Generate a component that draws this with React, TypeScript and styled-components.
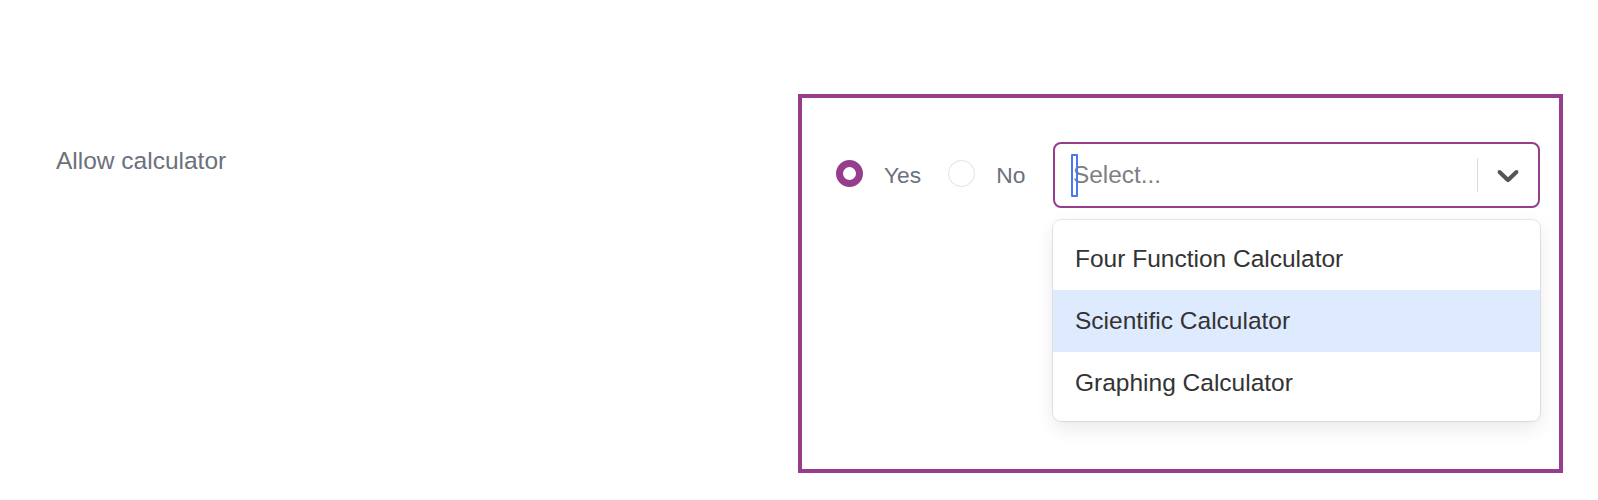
import React from "react";
import styled, { createGlobalStyle } from "styled-components";

const GlobalStyle = createGlobalStyle`
  html, body {
    margin: 0;
    padding: 0;
    background: #ffffff;
  }
  body {
    font-family: "Liberation Sans", Arial, sans-serif;
  }
  * { box-sizing: border-box; }
`;

const PURPLE = "#963e8d";

const Page = styled.div`
  display: flex;
  align-items: flex-start;
  height: 500px;
  padding-top: 94px;
`;

const LabelCol = styled.div`
  width: 798px;
  padding-left: 56px;
  padding-top: 53px;
`;

const FieldLabel = styled.span`
  font-size: 24.5px;
  line-height: 28px;
  color: #6b717d;
`;

const FocusBox = styled.div`
  width: 765px;
  height: 379px;
  border: 4px solid ${PURPLE};
  padding: 44px 19px 0 34px;
`;

const Row = styled.div`
  display: flex;
  align-items: center;
  gap: 27px;
`;

const RadioOption = styled.label`
  display: flex;
  align-items: center;
  gap: 21px;
  margin-top: -4px;
`;

const RadioDot = styled.span<{ $checked?: boolean }>`
  display: inline-block;
  width: 27px;
  height: 27px;
  border-radius: 50%;
  background: #ffffff;
  border: ${(p) => (p.$checked ? `7.5px solid ${PURPLE}` : "1.5px solid #dfe0e6")};
`;

const RadioText = styled.span`
  font-size: 22.8px;
  line-height: 28px;
  color: #6b717d;
  margin-top: 4px;
`;

const SelectWrap = styled.div`
  position: relative;
  width: 487px;
  margin-left: auto;
`;

const Control = styled.div`
  display: flex;
  align-items: center;
  height: 66px;
  border: 2px solid ${PURPLE};
  border-radius: 8px;
  background: #ffffff;
`;

const ValueContainer = styled.div`
  position: relative;
  flex: 1;
  align-self: stretch;
  display: flex;
  align-items: center;
  padding-left: 18px;
`;

const Placeholder = styled.span`
  font-size: 24.4px;
  line-height: 28px;
  color: #7f7f7f;
`;

const Caret = styled.span`
  position: absolute;
  left: 16px;
  top: 10px;
  width: 7px;
  height: 43px;
  border: 2px solid #4a78f0;
  border-radius: 1px;
`;

const Indicators = styled.div`
  display: flex;
  align-items: center;
  align-self: stretch;
`;

const Separator = styled.span`
  width: 1px;
  height: 34px;
  background: #dcdcdc;
`;

const ChevronBox = styled.div`
  display: flex;
  align-items: center;
  padding: 0 12px 0 12px;
  color: #555555;
`;

const Menu = styled.div`
  position: absolute;
  top: calc(100% + 12px);
  left: 0;
  right: 0;
  padding: 8px 0 7px;
  background: #ffffff;
  border-radius: 8px;
  box-shadow: 0 0 0 1px rgba(0, 0, 0, 0.09), 0 7px 19px rgba(0, 0, 0, 0.09);
`;

const Option = styled.div<{ $active?: boolean }>`
  display: flex;
  align-items: center;
  height: 62px;
  padding-left: 22px;
  font-size: 24.5px;
  color: #333333;
  background: ${(p) => (p.$active ? "#deebff" : "transparent")};
`;

const Chevron = () => (
  <svg width="36" height="36" viewBox="0 0 20 20" fill="currentColor" aria-hidden="true">
    <path d="M4.516 7.548c0.436-0.446 1.043-0.481 1.576 0l3.908 3.747 3.908-3.747c0.533-0.481 1.141-0.446 1.574 0 0.436 0.445 0.408 1.197 0 1.615-0.406 0.418-4.695 4.502-4.695 4.502-0.217 0.223-0.502 0.335-0.787 0.335s-0.57-0.112-0.789-0.335c0 0-4.287-4.084-4.695-4.502s-0.436-1.17 0-1.615z" />
  </svg>
);

const options = [
  { label: "Four Function Calculator", active: false },
  { label: "Scientific Calculator", active: true },
  { label: "Graphing Calculator", active: false },
];

export default function App() {
  return (
    <>
      <GlobalStyle />
      <Page>
        <LabelCol>
          <FieldLabel>Allow calculator</FieldLabel>
        </LabelCol>
        <FocusBox>
          <Row>
            <RadioOption>
              <RadioDot $checked />
              <RadioText>Yes</RadioText>
            </RadioOption>
            <RadioOption>
              <RadioDot />
              <RadioText>No</RadioText>
            </RadioOption>
            <SelectWrap>
              <Control>
                <ValueContainer>
                  <Placeholder>Select...</Placeholder>
                  <Caret />
                </ValueContainer>
                <Indicators>
                  <Separator />
                  <ChevronBox>
                    <Chevron />
                  </ChevronBox>
                </Indicators>
              </Control>
              <Menu>
                {options.map((o) => (
                  <Option key={o.label} $active={o.active}>
                    {o.label}
                  </Option>
                ))}
              </Menu>
            </SelectWrap>
          </Row>
        </FocusBox>
      </Page>
    </>
  );
}
